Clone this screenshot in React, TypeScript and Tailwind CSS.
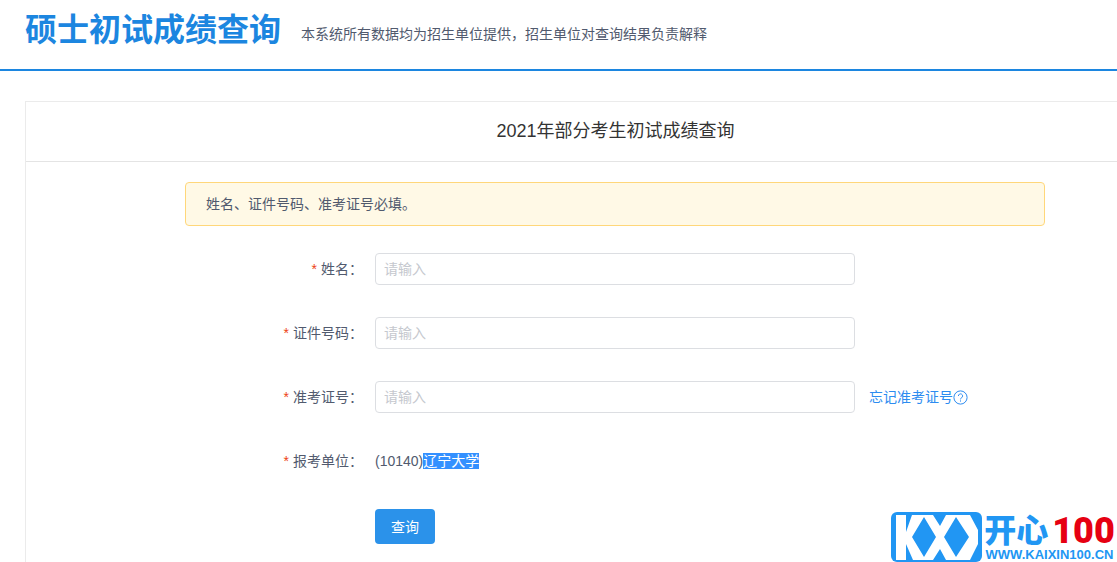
import { useState } from "react";
import type { ReactNode } from "react";

const fields = [
  { id: "xm", label: "姓名" },
  { id: "zjhm", label: "证件号码" },
  { id: "zkzh", label: "准考证号" },
];

function RowLabel({ children, htmlFor }: { children: ReactNode; htmlFor?: string }) {
  const Tag = htmlFor ? "label" : "span";
  return (
    <Tag htmlFor={htmlFor} className="w-[190px] shrink-0 pr-3 text-right">
      <span className="mr-1 text-[#ed3f14]">*</span>
      {children}：
    </Tag>
  );
}

function Watermark() {
  return (
    <div className="absolute right-0 bottom-0 flex items-end">
      <svg width="91" height="50" viewBox="0 0 91 50" aria-hidden="true">
        <rect width="91" height="50" rx="6" fill="#2196f3" />
        <path d="M5 3H15V20L21 3H42L49 14L55 3H79L87 18V32L79 48H55L49 37L42 48H22L15 32V48H5Z" fill="#fff" />
        <path d="M33 5L45 25L33 45L21 25ZM65 5L78 25L65 45L53 25Z" fill="#2196f3" />
      </svg>
      <div className="flex w-[135px] flex-col items-center">
        <div className="flex items-center gap-1 leading-8">
          <span className="text-[32px] font-black text-[#2196f3]">开心</span>
          <span className="font-['Roboto',sans-serif] text-4xl leading-8 font-black text-[#e60012]">100</span>
        </div>
        <span className="text-[13px] leading-[15px] font-bold text-[#2196f3]">WWW.KAIXIN100.CN</span>
      </div>
    </div>
  );
}

export default function App() {
  const [values, setValues] = useState<Record<string, string>>({});

  return (
    <div className="relative flex min-h-screen flex-col overflow-hidden bg-white font-['Liberation_Sans','Noto_Sans_CJK_SC',sans-serif] text-sm text-[#515a6e]">
      {/* Header */}
      <header className="flex items-center gap-5 border-b-2 border-[#1c86e0] px-[25px] pt-1.5 pb-3.5">
        <h1 className="text-[32px] leading-[49px] font-bold text-[#1c86e0]">硕士初试成绩查询</h1>
        <p className="pt-1.5">本系统所有数据均为招生单位提供，招生单位对查询结果负责解释</p>
      </header>

      <main className="mt-[30px] ml-[25px] flex-1 border-t border-l border-[#ebebeb]">
        <h2 className="border-b border-[#e4e4e4] pl-[88px] text-center text-lg leading-[59px] text-[#333]">
          2021年部分考生初试成绩查询
        </h2>

        <div className="pt-5 pr-[72px] pl-[159px]">
          <div className="rounded border border-[#ffd77a] bg-[#fff9e6] px-5 py-[11px]">
            姓名、证件号码、准考证号必填。
          </div>

          {/* Query form */}
          <form className="mt-[27px] flex flex-col gap-8" onSubmit={(e) => e.preventDefault()}>
            {fields.map((field) => (
              <div key={field.id} className="flex items-center">
                <RowLabel htmlFor={field.id}>{field.label}</RowLabel>
                <input
                  id={field.id}
                  type="text"
                  placeholder="请输入"
                  value={values[field.id] ?? ""}
                  onChange={(e) => setValues({ ...values, [field.id]: e.target.value })}
                  className="h-8 w-full max-w-[480px] rounded border border-[#dcdee2] px-2 placeholder:text-[#c5c8ce]"
                />
                {field.id === "zkzh" && (
                  <a href="#" className="ml-3.5 flex shrink-0 items-center text-[#2d8cf0]">
                    忘记准考证号
                    <svg width="15" height="15" viewBox="0 0 15 15" fill="none" stroke="currentColor" aria-hidden="true">
                      <circle cx="7.5" cy="7.5" r="6.6" />
                      <path d="M5.4 6a2.1 2.1 0 1 1 3.3 1.7c-.8.5-1.2.8-1.2 1.7M7.5 10.4v1.2" />
                    </svg>
                  </a>
                )}
              </div>
            ))}

            <div className="flex h-8 items-center">
              <RowLabel>报考单位</RowLabel>
              <span>(10140)</span>
              <span className="bg-[#3390ff] leading-4 text-white">辽宁大学</span>
            </div>

            <button type="submit" className="ml-[190px] h-[35px] w-15 rounded bg-[#2b92ea] text-white">
              查询
            </button>
          </form>
        </div>
      </main>

      <Watermark />
    </div>
  );
}
